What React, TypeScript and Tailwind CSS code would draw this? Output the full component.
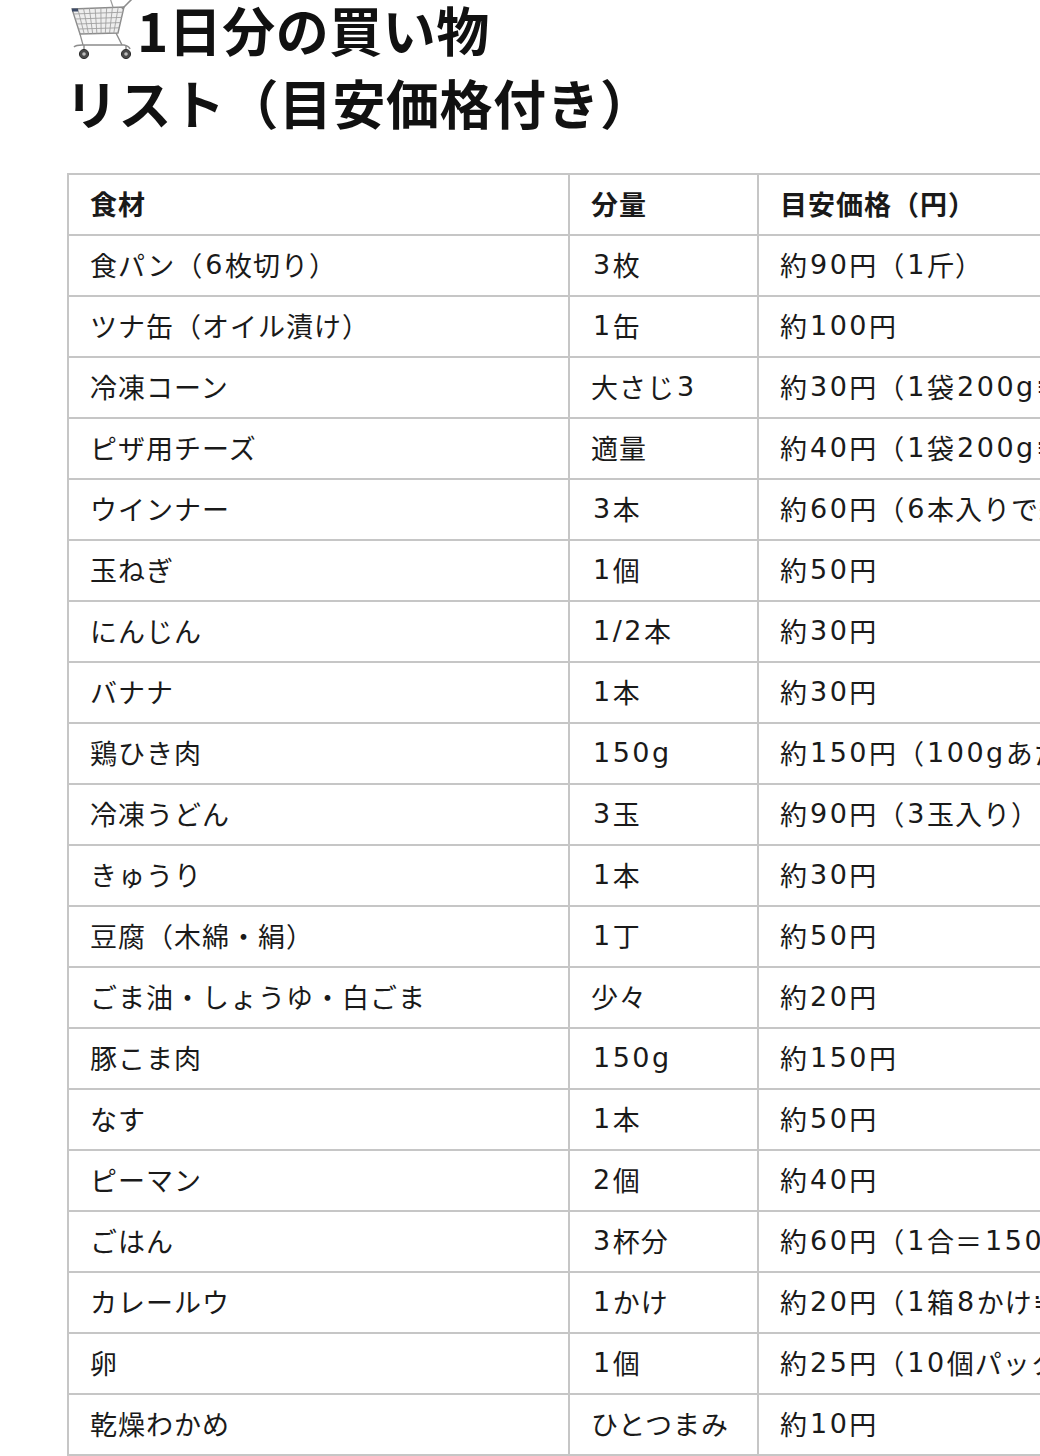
import React from "react";

const rows: [string, string, string][] = [
  ["食パン（6枚切り）", "3枚", "約90円（1斤）"],
  ["ツナ缶（オイル漬け）", "1缶", "約100円"],
  ["冷凍コーン", "大さじ3", "約30円（1袋200g≒約150円）"],
  ["ピザ用チーズ", "適量", "約40円（1袋200g≒約200円）"],
  ["ウインナー", "3本", "約60円（6本入りで約120円）"],
  ["玉ねぎ", "1個", "約50円"],
  ["にんじん", "1/2本", "約30円"],
  ["バナナ", "1本", "約30円"],
  ["鶏ひき肉", "150g", "約150円（100gあたり約100円）"],
  ["冷凍うどん", "3玉", "約90円（3玉入り）"],
  ["きゅうり", "1本", "約30円"],
  ["豆腐（木綿・絹）", "1丁", "約50円"],
  ["ごま油・しょうゆ・白ごま", "少々", "約20円"],
  ["豚こま肉", "150g", "約150円"],
  ["なす", "1本", "約50円"],
  ["ピーマン", "2個", "約40円"],
  ["ごはん", "3杯分", "約60円（1合＝150g約60円）"],
  ["カレールウ", "1かけ", "約20円（1箱8かけ≒約160円）"],
  ["卵", "1個", "約25円（10個パック約250円）"],
  ["乾燥わかめ", "ひとつまみ", "約10円"],
];

function Txt({ s }: { s: string }) {
  const parts = s.split(/([0-9a-z/]+)/);
  return (
    <>
      {parts.map((p, i) =>
        /^[0-9a-z/]+$/.test(p) ? (
          <span key={i} className="font-['DejaVu_Sans',sans-serif] tracking-[2.5px] ml-[2px]">
            {p}
          </span>
        ) : (
          <span key={i}>{p}</span>
        )
      )}
    </>
  );
}

function Cart() {
  const topL = [6, 12];
  const topR = [58, 10];
  const botL = [14, 37];
  const botR = [52, 36];
  const vlines = [];
  const n = 9;
  for (let i = 1; i < n; i++) {
    const t = i / n;
    const x1 = topL[0] + (topR[0] - topL[0]) * t;
    const y1 = topL[1] + (topR[1] - topL[1]) * t;
    const x2 = botL[0] + (botR[0] - botL[0]) * t;
    const y2 = botL[1] + (botR[1] - botL[1]) * t;
    vlines.push(<line key={"v" + i} x1={x1} y1={y1} x2={x2} y2={y2} />);
  }
  const hlines = [];
  const m = 5;
  for (let i = 1; i < m; i++) {
    const t = i / m;
    const x1 = topL[0] + (botL[0] - topL[0]) * t;
    const y1 = topL[1] + (botL[1] - topL[1]) * t;
    const x2 = topR[0] + (botR[0] - topR[0]) * t;
    const y2 = topR[1] + (botR[1] - topR[1]) * t;
    hlines.push(<line key={"h" + i} x1={x1} y1={y1} x2={x2} y2={y2} />);
  }
  return (
    <svg width="72" height="64" viewBox="0 0 72 64" className="shrink-0 -ml-[1px] -mt-[2px]">
      <polygon
        points={`${topL} ${topR} ${botR} ${botL}`}
        fill="#eeeeee"
        stroke="#8c8c8c"
        strokeWidth="1.4"
      />
      <g stroke="#a0a0a0" strokeWidth="0.9">
        {vlines}
        {hlines}
      </g>
      <line x1="44" y1="1" x2="47" y2="10" stroke="#9a9a9a" strokeWidth="1.2" />
      <path d="M56 12 L61 7 L67 1" stroke="#8c8c8c" strokeWidth="1.6" fill="none" />
      <path d="M50 36 L56 48" stroke="#8c8c8c" strokeWidth="1.4" fill="none" />
      <path d="M14 37 L17 48" stroke="#8c8c8c" strokeWidth="1.2" fill="none" />
      <path d="M8 50 Q10 48 16 48 L58 48 Q63 49 64 52" stroke="#8c8c8c" strokeWidth="1.6" fill="none" />
      <line x1="18" y1="48" x2="18" y2="53" stroke="#888" strokeWidth="1.4" />
      <line x1="60" y1="49" x2="60" y2="53" stroke="#888" strokeWidth="1.4" />
      <circle cx="18" cy="57" r="4.6" fill="#4a4a4a" stroke="#2e2e2e" strokeWidth="1" />
      <circle cx="18" cy="57" r="1.8" fill="#bdbdbd" />
      <circle cx="60" cy="57" r="4.6" fill="#4a4a4a" stroke="#2e2e2e" strokeWidth="1" />
      <circle cx="60" cy="57" r="1.8" fill="#bdbdbd" />
      <rect x="6" y="11.5" width="6" height="3" fill="#3d4b66" />
    </svg>
  );
}

export default function App() {
  return (
    <div className="w-[1040px] h-[1456px] overflow-hidden bg-white text-[#1a1a1a] font-['Noto_Sans_CJK_JP','Noto_Sans',sans-serif]">
      <div className="pl-[67px] pt-px">
        <h1 className="-mt-[8px] text-[53px] leading-[73px] font-bold text-[#111] tracking-[0.5px]">
          <div className="flex items-center">
            <Cart />
            <span className="-ml-[1px]">1日分の買い物</span>
          </div>
          <div className="-ml-[2px]">リスト（目安価格付き）</div>
        </h1>
        <div className="mt-[34px] w-[1200px] border-t-2 border-l-2 border-[#c6c6c6] text-[27px] tracking-[1px]">
          <div className="flex h-[61px] border-b-2 border-[#c6c6c6] font-bold">
            <div className="w-[501px] shrink-0 border-r-2 border-[#c6c6c6] pl-[21px] flex items-center">食材</div>
            <div className="w-[189px] shrink-0 border-r-2 border-[#c6c6c6] pl-[21px] flex items-center">分量</div>
            <div className="w-[480px] shrink-0 border-r-2 border-[#c6c6c6] pl-[21px] flex items-center whitespace-nowrap">目安価格（円）</div>
          </div>
          {rows.map((r, i) => (
            <div key={i} className="flex h-[61px] border-b-2 border-[#c6c6c6]">
              <div className="w-[501px] shrink-0 border-r-2 border-[#c6c6c6] pl-[21px] flex items-center whitespace-nowrap">
                <Txt s={r[0]} />
              </div>
              <div className="w-[189px] shrink-0 border-r-2 border-[#c6c6c6] pl-[21px] flex items-center whitespace-nowrap">
                <Txt s={r[1]} />
              </div>
              <div className="w-[480px] shrink-0 border-r-2 border-[#c6c6c6] pl-[21px] flex items-center whitespace-nowrap overflow-hidden">
                <Txt s={r[2]} />
              </div>
            </div>
          ))}
        </div>
      </div>
    </div>
  );
}
